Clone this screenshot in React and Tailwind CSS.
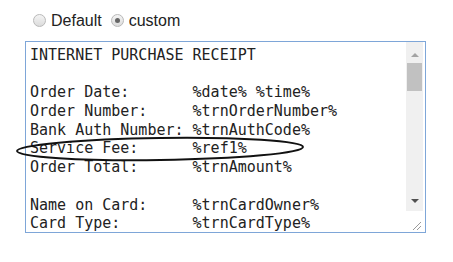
const lines = [
  "INTERNET PURCHASE RECEIPT",
  "",
  "Order Date:       %date% %time%",
  "Order Number:     %trnOrderNumber%",
  "Bank Auth Number: %trnAuthCode%",
  "Service Fee:      %ref1%",
  "Order Total:      %trnAmount%",
  "",
  "Name on Card:     %trnCardOwner%",
  "Card Type:        %trnCardType%",
];

const Radio = ({ checked }) => (
  <span className="w-[13px] h-[13px] rounded-full border border-[#b9b9b9] bg-gradient-to-b from-[#f4f4f4] to-[#dcdcdc] flex items-center justify-center">
    {checked && <span className="w-[5px] h-[5px] rounded-full bg-[#666]" />}
  </span>
);

const App = () => {
  return (
    <div className="w-[453px] h-[262px] bg-white relative font-['Liberation_Sans',Arial,sans-serif]">
      <div className="flex items-center gap-[5px] pl-[33px] pt-[12px] text-[16px] text-[#222] leading-[17px]">
        <Radio />
        <span className="mr-[4px]">Default</span>
        <Radio checked />
        <span>custom</span>
      </div>
      <div className="ml-[25px] mt-[12px] w-[401px] h-[192px] border border-[#7ea6d8] flex overflow-hidden">
        <div className="flex-1 pl-[4px] pt-[4px] font-['DejaVu_Sans_Mono',monospace] text-[15px] leading-[18.7px] text-[#222] whitespace-pre">
          {lines.map((l, i) => (
            <div key={i} className="h-[18.7px]">{l}</div>
          ))}
        </div>
        <div className="w-[17px] bg-[#f0f0f0] flex flex-col mr-[2px]">
          <div className="h-[21px] flex items-center justify-center pt-[4px]">
            <span className="w-0 h-0 border-l-[4px] border-r-[4px] border-b-[4px] border-l-transparent border-r-transparent border-b-[#a3a3a3]" />
          </div>
          <div className="mx-[1px] h-[28px] bg-[#c1c1c1]" />
          <div className="flex-1" />
          <div className="h-[20px] flex items-center justify-center">
            <span className="w-0 h-0 border-l-[4px] border-r-[4px] border-t-[4px] border-l-transparent border-r-transparent border-t-[#505050]" />
          </div>
          <div className="h-[21px] bg-white relative">
            <svg width="17" height="21" className="absolute inset-0">
              <line x1="7" y1="19" x2="15" y2="11" stroke="#9a9a9a" strokeWidth="1" />
              <line x1="11" y1="19" x2="15" y2="15" stroke="#9a9a9a" strokeWidth="1" />
            </svg>
          </div>
        </div>
      </div>
      <svg className="absolute left-0 top-0 pointer-events-none" width="453" height="262">
        <ellipse cx="160" cy="149" rx="143" ry="11" fill="none" stroke="#111" strokeWidth="2" transform="rotate(-0.8 160 149)" />
      </svg>
    </div>
  );
};

export default App;
